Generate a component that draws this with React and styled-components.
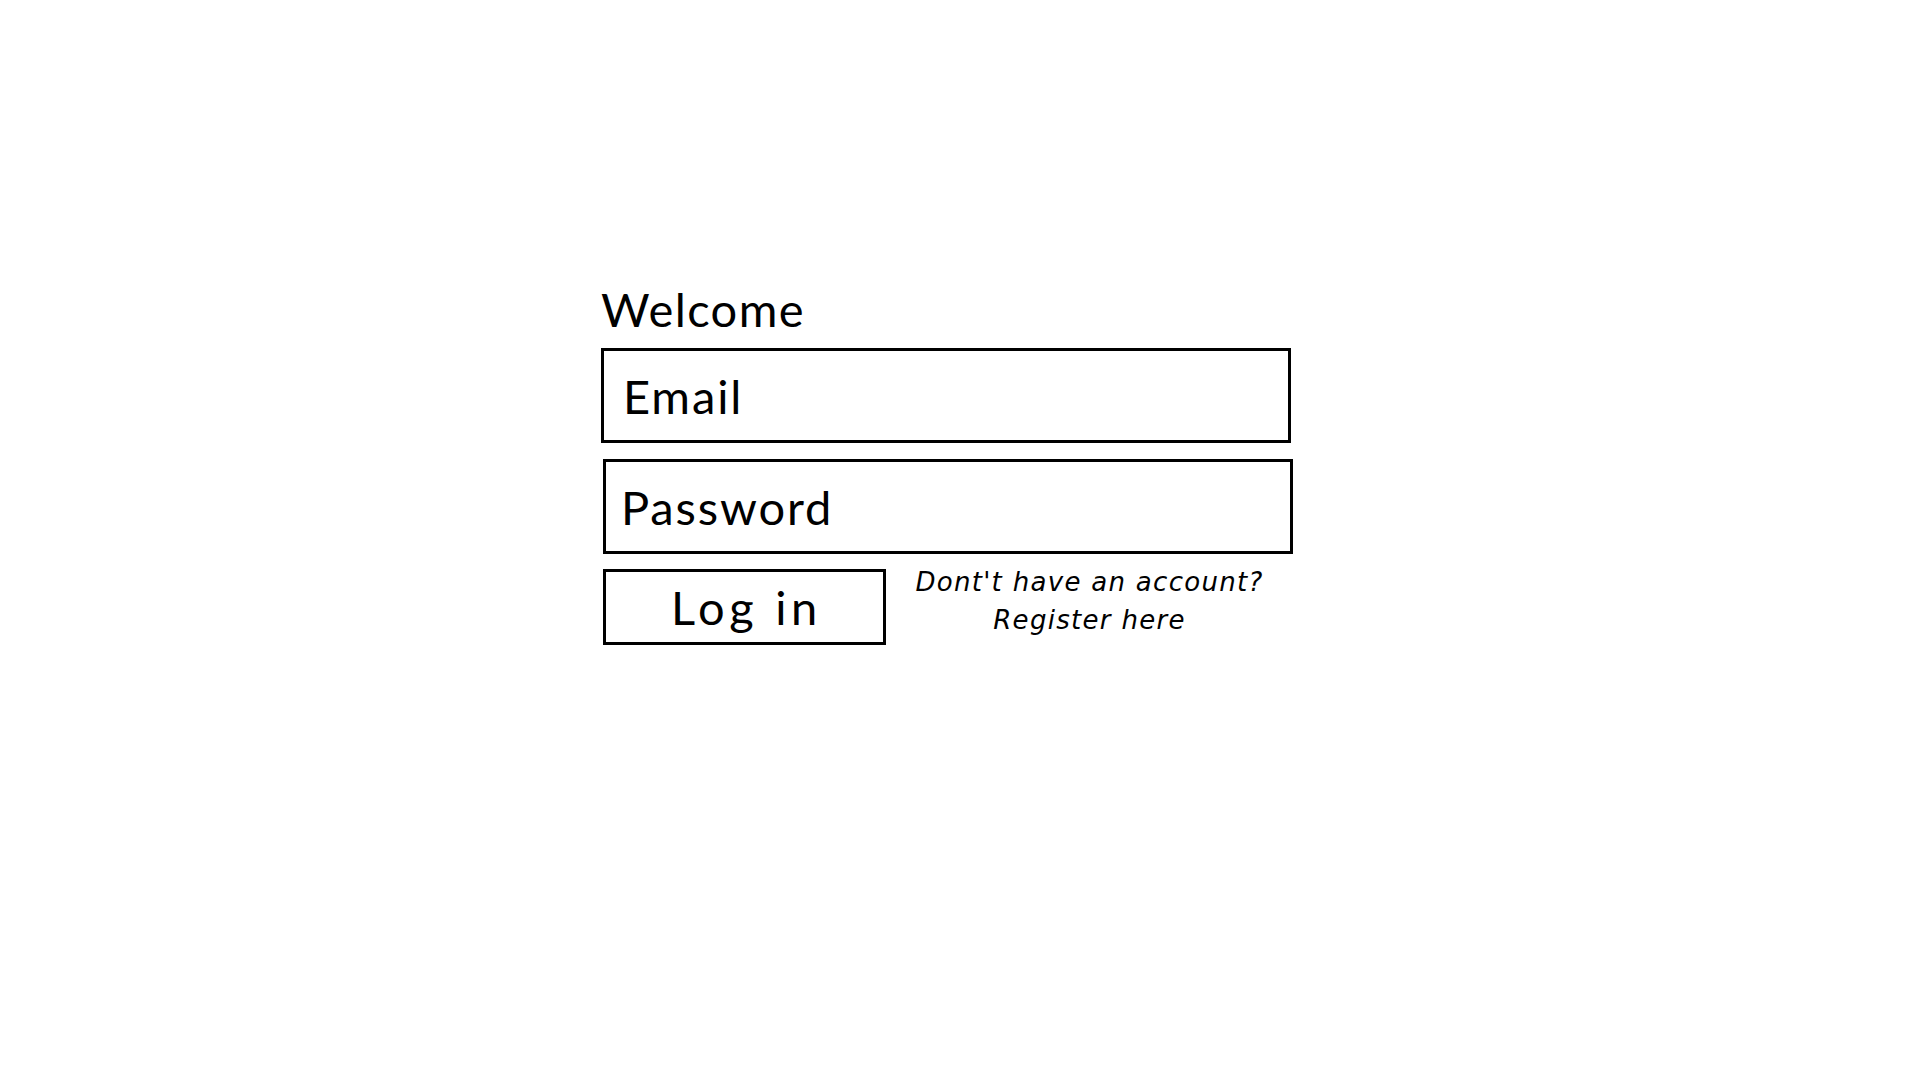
import React from "react";
import styled, { createGlobalStyle } from "styled-components";

const Global = createGlobalStyle`
  html, body { margin: 0; padding: 0; background: #ffffff; }
  body {
    font-family: Lato, "Liberation Sans", sans-serif;
    color: #000000;
  }
  * { box-sizing: border-box; }
`;

const Page = styled.main`
  min-height: 1076px;
  padding: 281px 0 0 601px;
`;

const Form = styled.form`
  display: flex;
  flex-direction: column;
  width: 692px;
`;

const Title = styled.h1`
  margin: 0 0 11px;
  font-size: 47px;
  line-height: 56px;
  font-weight: 400;
  letter-spacing: 0.03em;
`;

const Field = styled.input`
  display: block;
  width: 690px;
  height: 95px;
  margin: ${(p) => p.$top || 0}px 0 0 ${(p) => p.$shift || 0}px;
  padding: 0 0 0 ${(p) => p.$pad}px;
  border: 3px solid #000000;
  border-radius: 0;
  background: #ffffff;
  font-family: Lato, "Liberation Sans", sans-serif;
  font-size: 47px;
  font-weight: 400;
  letter-spacing: 0.04em;
  color: #000000;
  outline: none;
  &::placeholder { color: #000000; opacity: 1; }
`;

const Actions = styled.div`
  display: flex;
  align-items: center;
  width: 690px;
  margin: 9px 0 0 2px;
`;

const Button = styled.button`
  flex: 0 0 283px;
  height: 76px;
  padding: 0 0 0 4px;
  border: 3px solid #000000;
  border-radius: 0;
  background: #ffffff;
  font-family: Lato, "Liberation Sans", sans-serif;
  font-size: 47px;
  font-weight: 400;
  letter-spacing: 0.1em;
  color: #000000;
  cursor: pointer;
`;

const Note = styled.p`
  flex: 1;
  margin: 0;
  padding-bottom: 12px;
  text-align: center;
  font-family: "DejaVu Sans", Verdana, sans-serif;
  font-style: italic;
  font-size: 26px;
  line-height: 38px;
  letter-spacing: 0.05em;
`;

const Link = styled.a`
  color: inherit;
  text-decoration: none;
`;

export default function App() {
  return (
    <>
      <Global />
      <Page>
        <Form onSubmit={(e) => e.preventDefault()}>
          <Title>Welcome</Title>
          <Field type="email" placeholder="Email" $pad={19} />
          <Field type="password" placeholder="Password" $pad={15} $top={16} $shift={2} />
          <Actions>
            <Button type="submit">Log in</Button>
            <Note>
              Dont't have an account?
              <br />
              <Link href="#">Register here</Link>
            </Note>
          </Actions>
        </Form>
      </Page>
    </>
  );
}
